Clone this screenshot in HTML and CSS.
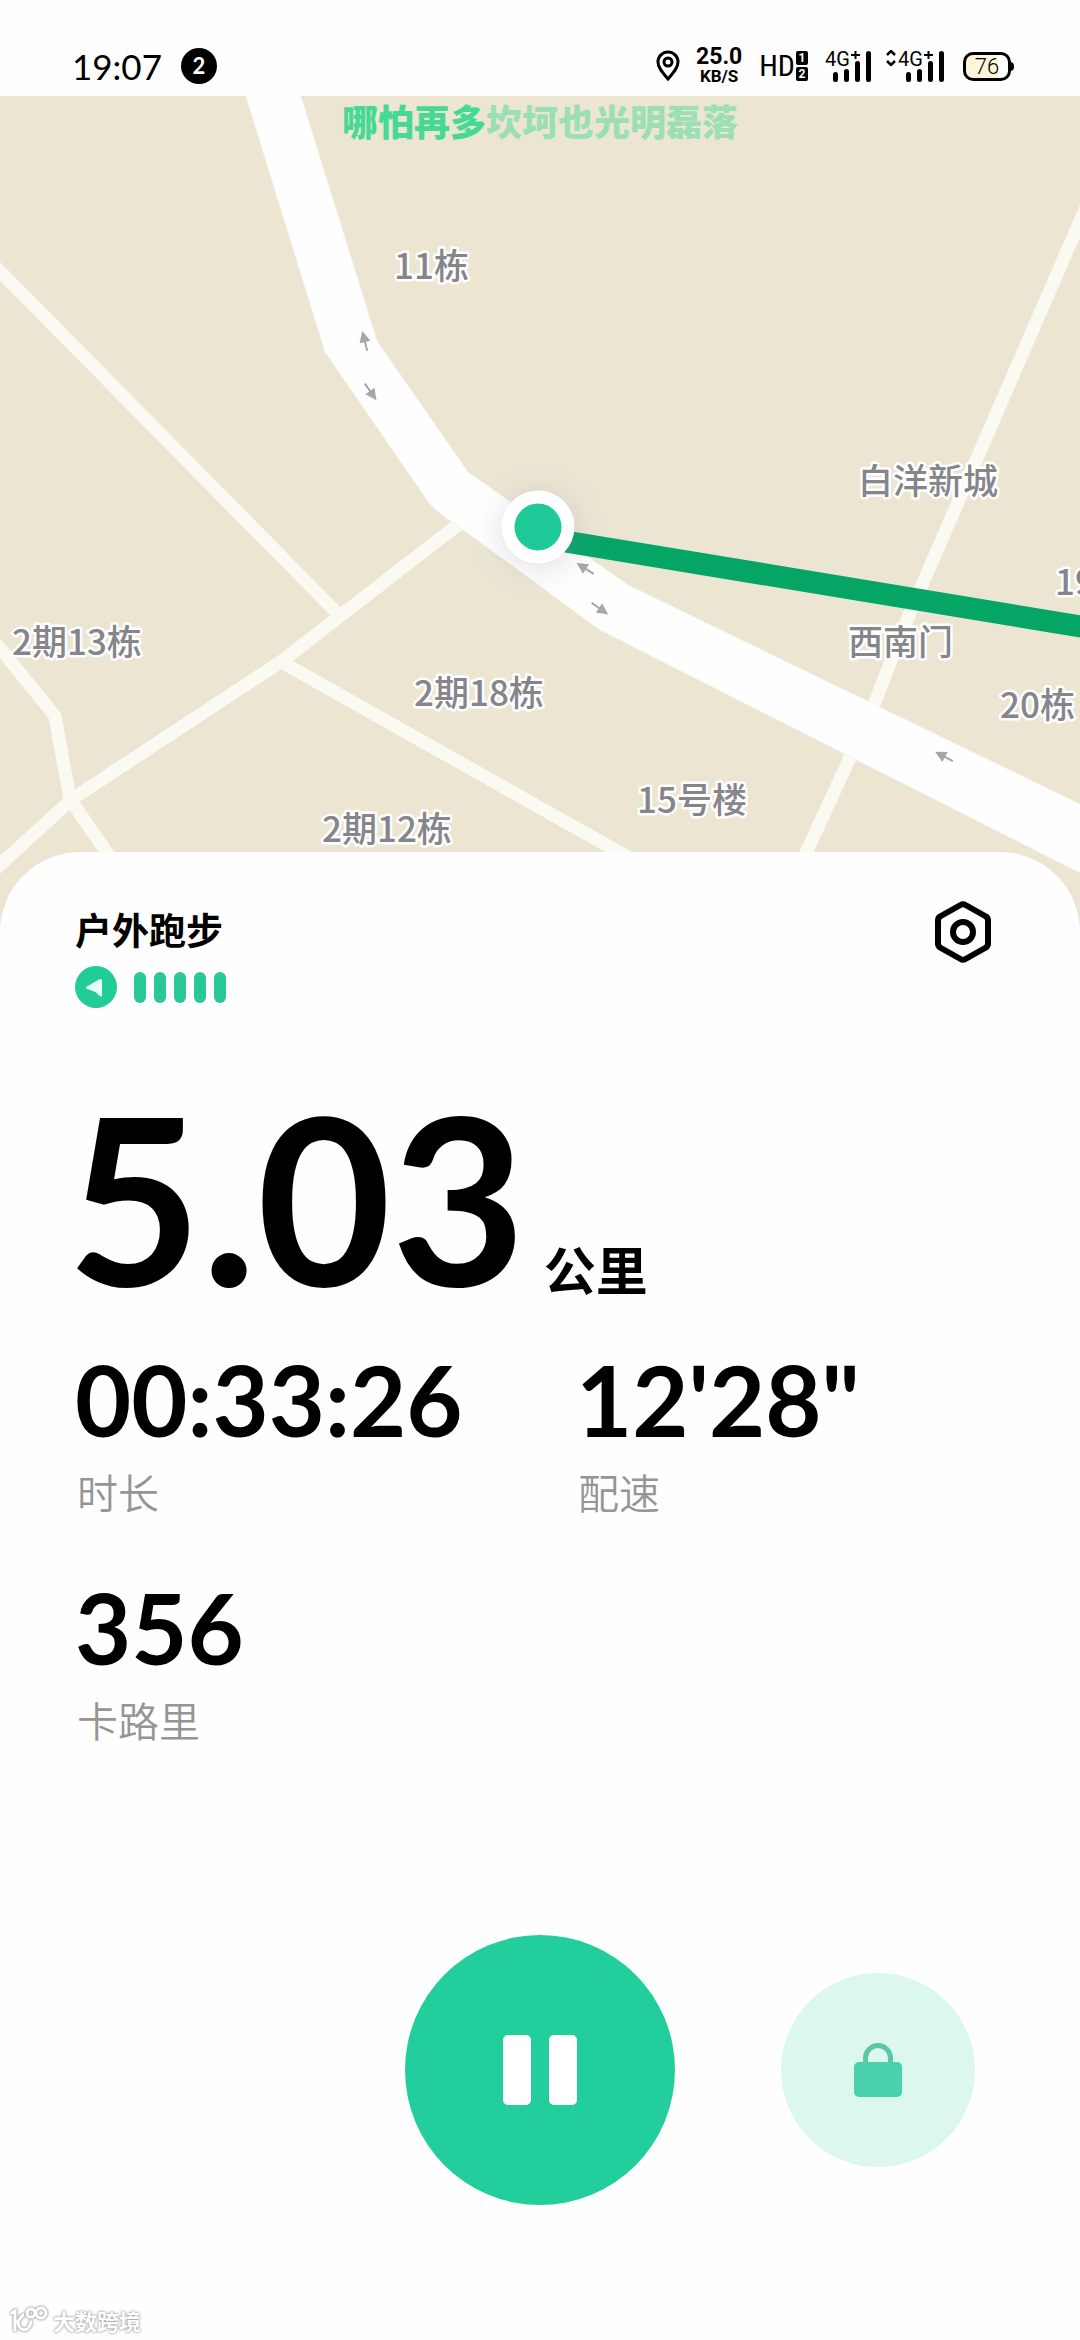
FILE: index.html
```html
<!DOCTYPE html>
<html lang="zh-CN">
<head>
<meta charset="utf-8">
<meta name="viewport" content="width=device-width, initial-scale=1">
<title>户外跑步</title>
<link rel="stylesheet" href="styles.css">
</head>
<body>
<header class="status">
  <div class="status-left">
    <span class="clock">19:07</span>
    <span class="badge">2</span>
  </div>
  <div class="status-right">
    <svg class="pin" width="24" height="32" viewBox="0 0 24 32" fill="none" stroke="#000" stroke-width="3">
      <path d="M12 29C7 23 2 18 2 12a10 10 0 0 1 20 0c0 6-5 11-10 17z"/><circle cx="12" cy="12" r="4"/>
    </svg>
    <div class="speed"><span class="speed-value">25.0</span><span class="speed-unit">KB/S</span></div>
    <div class="hd"><span class="hd-text">HD</span><span class="sims"><span class="sim">1</span><span class="sim">2</span></span></div>
    <div class="signal">
      <span class="net">4G</span>
      <svg width="40" height="32" viewBox="0 0 40 32">
        <path d="M20 5h9M24.500 1v8" stroke="#000" stroke-width="2"/>
        <path d="M4.500 24.500v5M15.500 21.500v8M26.500 13.500v16M37.500 3.500v26" stroke="#000" stroke-width="5" stroke-linecap="round"/>
      </svg>
    </div>
    <div class="signal signal-data">
      <svg class="updown" width="10" height="16" viewBox="0 0 10 16" fill="none" stroke="#000" stroke-width="2.500"><path d="M1 5l4-4 4 4M1 11l4 4 4-4"/></svg>
      <span class="net">4G</span>
      <svg width="40" height="32" viewBox="0 0 40 32">
        <path d="M20 5h9M24.500 1v8" stroke="#000" stroke-width="2"/>
        <path d="M4.500 24.500v5M15.500 21.500v8M26.500 13.500v16M37.500 3.500v26" stroke="#000" stroke-width="5" stroke-linecap="round"/>
      </svg>
    </div>
    <div class="battery">76</div>
  </div>
</header>

<main class="app">
  <section class="map" aria-label="地图">
    <svg class="map-canvas" viewBox="0 96 1080 836">
      <defs>
        <filter id="soft" x="-60%" y="-60%" width="220%" height="220%"><feGaussianBlur stdDeviation="14"/></filter>
        <path id="arrow" d="M0 9V-3M-4 -1L0 -9L4 -1Z"/>
      </defs>
      <rect y="96" width="1080" height="836" fill="#ebe5d2"/>
      <g class="lanes">
        <path d="M-10 261L337 613"/>
        <path d="M-10 874L72 799L282 661L464 520"/>
        <path d="M-10 636L55 716L70 799L116 866"/>
        <path d="M285 664L640 864"/>
        <path d="M1090 198L909 615L871 712L800 866"/>
      </g>
      <path class="avenue" d="M244 90L325 352L429 503Q440 515 458 526L600 630L1090 878V809L628 585L468 472L377 341L299 90Z"/>
      <g class="arrows">
        <use href="#arrow" transform="translate(365 342) rotate(-14)"/>
        <use href="#arrow" transform="translate(370 391) rotate(145)"/>
        <use href="#arrow" transform="translate(586 569) rotate(-57)"/>
        <use href="#arrow" transform="translate(599 608) rotate(125)"/>
        <use href="#arrow" transform="translate(945 757) rotate(-62)"/>
      </g>
      <path class="route" d="M538 537L1090 628"/>
      <circle cx="538" cy="532" r="40" fill="#857b96" fill-opacity=".2" filter="url(#soft)"/>
      <circle cx="538" cy="527" r="36.500" fill="#fff"/>
      <circle cx="538" cy="527" r="23.500" fill="#1fc998"/>
      <g class="labels">
        <text x="394" y="279">11栋</text>
        <text x="858" y="494">白洋新城</text>
        <text x="1055" y="595">19栋</text>
        <text x="848" y="655">西南门</text>
        <text x="12" y="655">2期13栋</text>
        <text x="414" y="706">2期18栋</text>
        <text x="1000" y="718">20栋</text>
        <text x="637" y="813">15号楼</text>
        <text x="322" y="842">2期12栋</text>
      </g>
    </svg>
    <p class="lyric"><span class="sung">哪怕再多</span>坎坷也光明磊落</p>
  </section>

  <section class="sheet">
    <div class="sheet-head">
      <div class="activity">
        <h1 class="title">户外跑步</h1>
        <div class="gps">
          <svg width="42" height="42" viewBox="0 0 42 42"><circle cx="21" cy="21" r="21" fill="#22cc98"/><path d="M12 20.500L24 13.500Q27 12 27 15V29Q27 32 24 29.500Q22 26 18 25L12 23Q10 22 12 20.500Z" fill="#e8fff8"/></svg>
          <span class="bars"><i></i><i></i><i></i><i></i><i></i></span>
        </div>
      </div>
      <button class="settings" aria-label="设置">
        <svg width="64" height="64" viewBox="0 0 64 64" fill="none" stroke="#000" stroke-width="6" stroke-linejoin="round">
          <path d="M29.500 5Q32 3.500 34.500 5L55 16.500Q57 18 57 20.500V43.500Q57 46 55 47.500L34.500 59Q32 60.500 29.500 59L9 47.500Q7 46 7 43.500V20.500Q7 18 9 16.500Z"/><circle cx="32" cy="32" r="10"/>
        </svg>
      </button>
    </div>

    <p class="distance"><span class="distance-value">5.03</span><span class="distance-unit">公里</span></p>

    <dl class="stats">
      <div class="stat"><dt>时长</dt><dd>00:33:26</dd></div>
      <div class="stat"><dt>配速</dt><dd>12'28"</dd></div>
      <div class="stat"><dt>卡路里</dt><dd>356</dd></div>
    </dl>

    <div class="controls">
      <button class="pause" aria-label="暂停"><span></span><span></span></button>
      <button class="lock" aria-label="锁定">
        <svg width="50" height="54" viewBox="0 0 50 54"><path d="M12.500 22V15a12.500 12.500 0 0 1 25 0V22" fill="none" stroke="#58c8a6" stroke-width="5"/><rect x="1" y="19" width="48" height="35" rx="5" fill="#49d1ac"/></svg>
      </button>
    </div>

    <footer class="watermark">
      <svg width="40" height="28" viewBox="0 0 40 28" fill="none" stroke-linecap="round">
        <path d="M3 7L6 5V24M9 15C9 26 20 27 22 16M9 15L14 9"/><circle cx="22" cy="7" r="4"/><circle cx="32" cy="7" r="5"/>
      </svg>
      <span>大数跨境</span>
    </footer>
  </section>
</main>
</body>
</html>
```
FILE: styles.css
```css
* { box-sizing: border-box; margin: 0; padding: 0; }

body {
  min-height: 100vh;
  display: flex;
  flex-direction: column;
  background: #fefefe;
  color: #000;
  font-family: Lato, "Noto Sans CJK SC", sans-serif;
}

button { border: 0; background: none; }
svg { display: block; }

/* status bar */
.status {
  height: 96px;
  padding: 36px 69px 0 72px;
  display: flex;
  justify-content: space-between;
  align-items: flex-start;
}
.status-left, .status-right { display: flex; align-items: center; height: 60px; }
.status-left { gap: 19px; }
.clock { font-size: 35px; line-height: 40px; }
.badge {
  width: 36px;
  height: 36px;
  border-radius: 50%;
  background: #000;
  color: #fff;
  font-size: 22px;
  font-weight: 700;
  line-height: 36px;
  text-align: center;
}
.status-right { font-family: Roboto, sans-serif; }
.speed {
  margin: 0 17px 0 16px;
  display: flex;
  flex-direction: column;
  align-items: center;
  font-weight: 700;
}
.speed-value { font-size: 23px; line-height: 20px; }
.speed-unit { font-size: 17px; line-height: 18px; }
.hd { display: flex; align-items: center; }
.hd-text { font-family: "Liberation Sans Narrow", "Roboto Condensed", Roboto, sans-serif; font-size: 30px; line-height: 32px; }
.sims { display: grid; gap: 2px; margin-left: 1px; }
.sim {
  width: 12px;
  height: 14px;
  border-radius: 2px;
  background: #000;
  color: #fff;
  font-size: 12px;
  font-weight: 700;
  line-height: 14px;
  text-align: center;
}
.signal { position: relative; margin-left: 23px; }
.signal-data { margin-left: 33px; }
.net { position: absolute; left: -6px; top: -2px; font-size: 20px; line-height: 22px; }
.updown { position: absolute; left: -18px; top: 0; }
.battery {
  position: relative;
  margin-left: 19px;
  width: 48px;
  height: 29px;
  border: 3px solid #000;
  border-radius: 10px;
  background: linear-gradient(90deg, #fbf5da 76%, #fff 76%);
  font-size: 22px;
  font-weight: 300;
  line-height: 24px;
  text-align: center;
}
.battery::after {
  content: "";
  position: absolute;
  right: -6px;
  top: 7px;
  width: 4px;
  height: 9px;
  border-radius: 0 4px 4px 0;
  background: #000;
}

/* map */
.app { flex: 1; display: flex; flex-direction: column; }
.map { position: relative; }
.map-canvas { width: 100%; height: auto; }
.lanes { fill: none; stroke: #fbfaf2; stroke-width: 13; stroke-linejoin: round; }
.avenue { fill: #fefefe; stroke: #f6f3ea; stroke-width: 1; }
.arrows { fill: #aaa5a8; stroke: #aaa5a8; stroke-width: 2; }
.route { stroke: #05a566; stroke-width: 22; }
.labels {
  font-family: "Noto Sans CJK SC", sans-serif;
  font-size: 35px;
  font-weight: 500;
  fill: #85858a;
  stroke: #fff;
  stroke-width: 5;
  stroke-linejoin: round;
  paint-order: stroke;
}
.lyric {
  position: absolute;
  top: 4px;
  left: 0;
  right: 0;
  font-size: 36px;
  font-weight: 900;
  line-height: 44px;
  text-align: center;
  color: #9bdfb3;
}
.sung { color: #46d993; }

/* sheet */
.sheet {
  position: relative;
  flex: 1;
  display: flex;
  flex-direction: column;
  margin-top: -80px;
  padding: 48px 75px 4px;
  border-radius: 80px 80px 0 0;
  background: #fefefe;
}
.sheet-head { display: flex; justify-content: space-between; align-items: flex-start; }
.activity { padding-top: 8px; }
.title { font-size: 37px; font-weight: 700; line-height: 46px; }
.gps { display: flex; align-items: center; gap: 17px; margin-top: 12px; }
.bars { display: flex; gap: 8px; }
.bars i { width: 12px; height: 31px; border-radius: 6px; background: #2bc897; }
.settings { margin-right: 10px; }

.distance { display: flex; align-items: flex-end; gap: 18px; margin-top: 88px; }
.distance-value { font-size: 232px; font-weight: 700; line-height: 200px; margin-left: -8px; }
.distance-unit { font-size: 52px; font-weight: 700; line-height: 50px; }

.stats { display: grid; grid-template-columns: 1fr 1fr; gap: 62px 72px; margin-top: 56px; }
.stat { display: flex; flex-direction: column-reverse; gap: 22px; }
.stat dd { font-size: 97px; font-weight: 700; line-height: 96px; }
.stat dt { padding-left: 2px; font-size: 41px; font-weight: 350; line-height: 48px; color: #959595; }

.controls {
  display: grid;
  grid-template-columns: 1fr 270px 1fr;
  align-items: center;
  margin-top: 189px;
}
.pause {
  grid-column: 2;
  height: 270px;
  border-radius: 50%;
  background: #22cf9c;
  display: flex;
  justify-content: center;
  align-items: center;
  gap: 18px;
}
.pause span { width: 28px; height: 70px; border-radius: 5px; background: #fff; }
.lock {
  margin-left: 106px;
  width: 194px;
  height: 194px;
  border-radius: 50%;
  background: #dcf7ee;
  display: grid;
  place-items: center;
}

.watermark {
  display: flex;
  align-items: center;
  gap: 4px;
  margin: auto 0 0 -66px;
  font-family: "Noto Sans CJK SC", sans-serif;
  font-size: 22px;
  font-weight: 700;
  line-height: 32px;
  color: #fff;
  text-shadow: 0 0 2px #999, 0 0 3px #aaa;
}
.watermark svg { stroke: #fff; stroke-width: 3; filter: drop-shadow(0 0 1px #999) drop-shadow(0 0 1px #bbb); }
```
